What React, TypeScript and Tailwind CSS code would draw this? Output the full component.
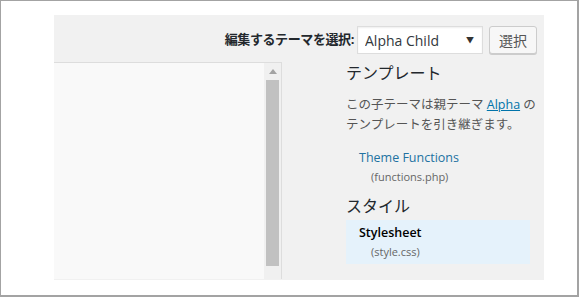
import { ChangeEvent, useState } from "react";

const font = "font-['Open_Sans','Noto_Sans_CJK_JP',sans-serif]";

function ThemePicker() {
  const [theme, setTheme] = useState("alpha-child");

  return (
    <div className="flex items-center justify-end gap-[3px] pr-[7px] pt-[11px]">
      <label className="text-[13px] font-bold text-[#23282d] tracking-[-0.4px]">
        編集するテーマを選択:
      </label>
      <div className="relative h-[28px] w-[126px] border border-[#dddddd] bg-white shadow-[inset_0_1px_2px_rgba(0,0,0,0.07)]">
        <select
          value={theme}
          onChange={(e: ChangeEvent<HTMLSelectElement>) => setTheme(e.target.value)}
          className="h-full w-full appearance-none bg-transparent pl-[7px] text-[14px] text-[#32373c] outline-none"
        >
          <option value="alpha-child">Alpha Child</option>
          <option value="alpha">Alpha</option>
        </select>
        <span className="pointer-events-none absolute right-[8px] top-[7px] text-[8px] text-[#333]">
          ▼
        </span>
      </div>
      <button className="ml-[3px] h-[28px] w-[48px] rounded-[3px] border border-[#cccccc] bg-[#f7f7f7] text-[14px] text-[#555] shadow-[0_1px_0_#cccccc]">
        選択
      </button>
    </div>
  );
}

function Editor() {
  return (
    <div className="flex h-[217px] w-[228px] border-t border-r border-[#dddddd]">
      <div className="flex-1 bg-[#f9f9f9]" />
      <div className="flex w-[17px] flex-col items-center bg-[#f0f0f0] pt-[6px]">
        <span className="h-0 w-0 border-x-[4px] border-b-[5px] border-x-transparent border-b-[#a3a3a3]" />
        <div className="mt-[6px] h-[186px] w-[13px] bg-[#c1c1c1]" />
      </div>
    </div>
  );
}

function FileLink({ name, file, active }: { name: string; file: string; active?: boolean }) {
  return (
    <div className={active ? "bg-[#e5f2fb] pb-[3px] pl-[13px] pt-[3px]" : "pl-[13px] pt-[5px]"}>
      <div className={active ? "text-[12.5px] font-semibold leading-[20px] text-black" : "text-[12.5px] leading-[20px] text-[#2271a1]"}>
        {name}
      </div>
      <div className="pl-[12px] text-[11px] leading-[18px] text-[#666]">{file}</div>
    </div>
  );
}

function Sidebar() {
  return (
    <div className="w-[184px] pt-[1px]">
      <h3 className="text-[16px] leading-[20px] text-[#23282d]">テンプレート</h3>
      <p className="mt-[12px] whitespace-nowrap text-[12.5px] leading-[20px] text-[#555]">
        この子テーマは親テーマ{" "}
        <a href="#" className="text-[#0073aa] underline">
          Alpha
        </a>{" "}
        の
        <br />
        テンプレートを引き継ぎます。
      </p>
      <div className="mt-[8px]">
        <FileLink name="Theme Functions" file="(functions.php)" />
      </div>
      <h3 className="mt-[10px] text-[16px] leading-[20px] text-[#23282d]">スタイル</h3>
      <div className="mt-[4px]">
        <FileLink name="Stylesheet" file="(style.css)" active />
      </div>
    </div>
  );
}

export default function App() {
  return (
    <div className={`${font} h-[298px] w-[580px] bg-white`}>
      <div className="h-[297px] w-[579px] border-b-2 border-l border-r-2 border-t border-[#a3a3a3] bg-white pl-[53px] pt-[14px]">
        <div className="h-[265px] w-[490px] bg-[#f1f1f1]">
          <ThemePicker />
          <div className="mt-[8px] flex gap-[64px]">
            <Editor />
            <Sidebar />
          </div>
        </div>
      </div>
    </div>
  );
}
